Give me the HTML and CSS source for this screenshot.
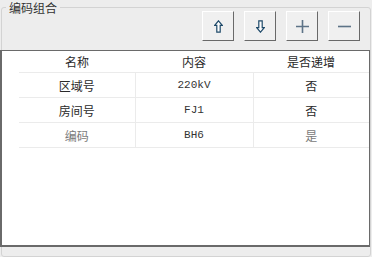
FILE: index.html
```html
<!DOCTYPE html>
<html lang="zh-CN">
  <head>
    <meta charset="UTF-8" />
    <title>编码组合</title>
    <link rel="stylesheet" href="styles.css">
  </head>
  <body>
    <div class="group">
      <div class="group-title">编码组合</div>

      <!-- toolbar: move up / move down / add / remove -->
      <div class="toolbar">
        <button class="tool-btn" title="上移">
          <svg width="9" height="13" viewBox="0 0 9 13">
            <path d="M4.5 0.8 L8.3 5.3 H6.2 V12.2 H2.8 V5.3 H0.7 Z" fill="#fdfdfd" stroke="#1f4a6a" stroke-width="1.2" stroke-linejoin="miter" />
          </svg>
        </button>
        <button class="tool-btn" title="下移">
          <svg width="9" height="13" viewBox="0 0 9 13">
            <path d="M4.5 12.2 L8.3 7.7 H6.2 V0.8 H2.8 V7.7 H0.7 Z" fill="#fdfdfd" stroke="#1f4a6a" stroke-width="1.2" stroke-linejoin="miter" />
          </svg>
        </button>
        <button class="tool-btn" title="添加">
          <svg width="15" height="15" viewBox="0 0 15 15">
            <path d="M7.5 1 V14 M1 7.5 H14" stroke="#5d7387" stroke-width="1.6" />
          </svg>
        </button>
        <button class="tool-btn" title="删除">
          <svg width="15" height="15" viewBox="0 0 15 15">
            <path d="M1 7.5 H14" stroke="#5d7387" stroke-width="1.6" />
          </svg>
        </button>
      </div>

      <div class="list">
        <table class="code-table">
          <thead>
            <tr>
              <th class="gutter"></th>
              <th>名称</th>
              <th>内容</th>
              <th>是否递增</th>
            </tr>
          </thead>
          <tbody>
            <tr>
              <td class="gutter"></td>
              <td>区域号</td>
              <td class="mono">220kV</td>
              <td>否</td>
            </tr>
            <tr>
              <td class="gutter"></td>
              <td>房间号</td>
              <td class="mono">FJ1</td>
              <td>否</td>
            </tr>
            <tr class="muted">
              <td class="gutter"></td>
              <td>编码</td>
              <td class="mono">BH6</td>
              <td>是</td>
            </tr>
          </tbody>
        </table>
      </div>
    </div>
  </body>
</html>
```

FILE: styles.css
```css
html,
body {
  margin: 0;
  padding: 0;
  background-color: #ededed;
  font-family: "Noto Sans CJK SC", "Noto Sans", sans-serif;
  font-size: 12px;
  color: #2a2a2a;
}

.group {
  margin: 7px 0 0 1px;
  width: 370px;
  height: 250px;
  box-sizing: border-box;
  border: 1px solid #d3d3d3;
  border-radius: 3px;
}

/* title sits on the top border line */
.group-title {
  display: table;
  margin: -7px 0 0 4px;
  padding: 0 3px;
  height: 13px;
  line-height: 13px;
  background-color: #ededed;
  color: #333;
}

.toolbar {
  display: flex;
  justify-content: flex-end;
  gap: 10px;
  margin-top: -3px;
  padding-right: 10px;
  height: 30px;
}

.tool-btn {
  width: 32px;
  height: 30px;
  padding: 0;
  background-color: #f0f0f0;
  border-top: 1px solid #ffffff;
  border-left: 1px solid #ffffff;
  border-right: 1px solid #696969;
  border-bottom: 1px solid #696969;
  display: flex;
  align-items: center;
  justify-content: center;
  cursor: pointer;
}

.list {
  margin: 9px 0 0 -2px;
  width: 370px;
  height: 197px;
  box-sizing: border-box;
  background: white;
  border: 1px solid #6a6a6a;
  border-width: 1px 1px 2px 2px;
}

.code-table {
  border-collapse: collapse;
  table-layout: fixed;
  width: 367px;
}

.code-table th {
  height: 21px;
  font-weight: normal;
  color: #2a2a2a;
  border-bottom: 1px solid #ebebeb;
  text-align: center;
  padding: 0;
}

.code-table td {
  height: 24px;
  padding: 0;
  text-align: center;
  border-bottom: 1px solid #ebebeb;
  border-left: 1px solid #ebebeb;
}

.code-table .gutter {
  width: 17px;
  border: none;
}

.code-table th:nth-child(2),
.code-table td:nth-child(2) {
  width: 116px;
}

.code-table th:nth-child(3),
.code-table td:nth-child(3) {
  width: 118px;
}

.code-table td:nth-child(2) {
  border-left: none;
}

.mono {
  font-family: "Liberation Mono", monospace;
  font-size: 11px;
  color: #333;
}

.muted td:nth-child(2),
.muted td:nth-child(4) {
  color: #7a7a7a;
}
```
